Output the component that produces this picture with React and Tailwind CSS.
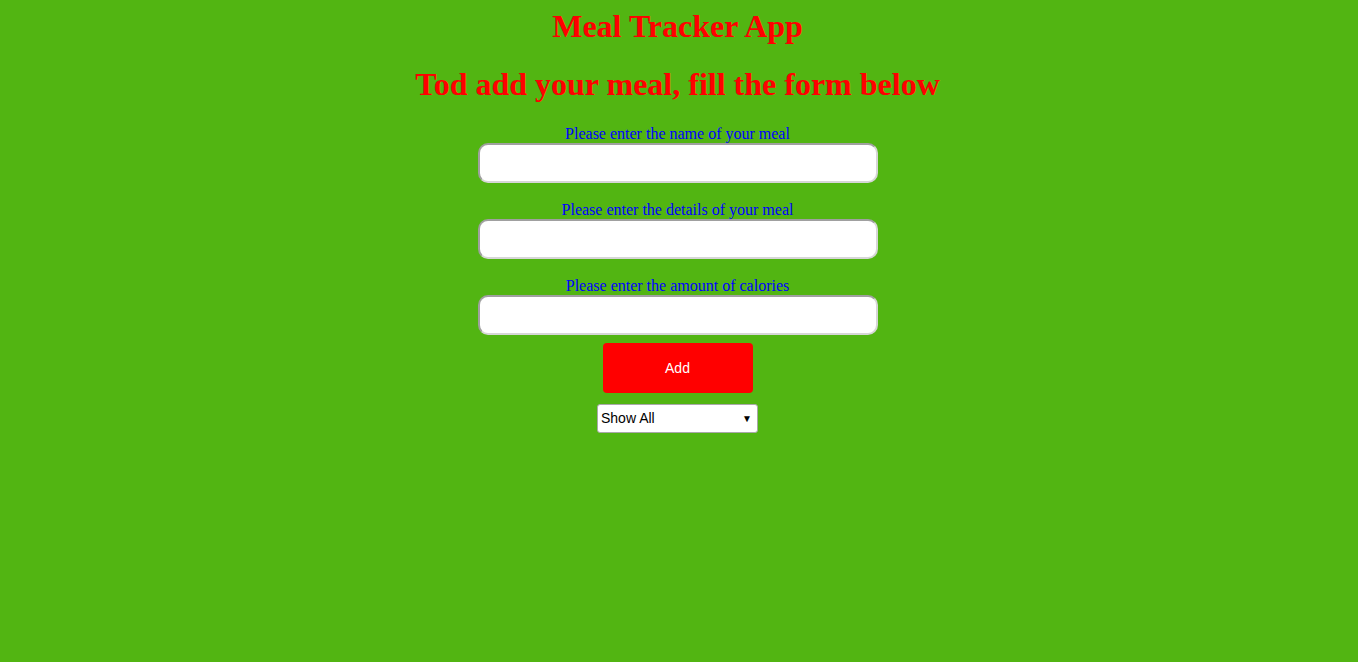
import { useState } from 'react';

const serif = { fontFamily: '"Liberation Serif", "Times New Roman", serif' };
const sans = { fontFamily: '"Liberation Sans", Arial, sans-serif' };

function Field({ label, value, onChange }) {
  return (
    <div className="flex flex-col items-center">
      <label className="text-[16px] leading-[18px] text-[#0000ff]" style={serif}>{label}</label>
      <input
        value={value}
        onChange={(e) => onChange(e.target.value)}
        className="w-[400px] h-[40px] bg-white rounded-[10px] border-2 border-t-[#a0a0a0] border-l-[#a0a0a0] border-r-[#d6d6d6] border-b-[#d6d6d6] px-2 outline-none"
      />
    </div>
  );
}

export default function App() {
  const [name, setName] = useState('');
  const [details, setDetails] = useState('');
  const [calories, setCalories] = useState('');
  const [filter, setFilter] = useState('all');

  return (
    <div className="min-h-[662px] bg-[#52b512] flex flex-col items-center pt-[9px] pr-[3px]">
      <h1 className="text-[32px] leading-[35px] font-bold text-[#ff0000]" style={serif}>Meal Tracker App</h1>
      <h1 className="mt-[23px] text-[32px] leading-[35px] font-bold text-[#ff0000]" style={serif}>Tod add your meal, fill the form below</h1>

      <div className="mt-[23px] flex flex-col items-center gap-[18px]">
        <Field label="Please enter the name of your meal" value={name} onChange={setName} />
        <Field label="Please enter the details of your meal" value={details} onChange={setDetails} />
        <Field label="Please enter the amount of calories" value={calories} onChange={setCalories} />
      </div>

      <button
        type="button"
        className="mt-[8px] w-[150px] h-[50px] bg-[#ff0000] rounded-[4px] text-white text-[14px]"
        style={sans}
      >
        Add
      </button>

      <div className="relative mt-[11px] w-[161px] h-[29px]" style={sans}>
        <select
          value={filter}
          onChange={(e) => setFilter(e.target.value)}
          className="appearance-none w-full h-full bg-white border border-[#a9a9a9] rounded-[3px] pl-[3px] text-[14px] text-black outline-none"
        >
          <option value="all">Show All</option>
          <option value="high">High Calorie</option>
          <option value="low">Low Calorie</option>
        </select>
        <span className="absolute right-[6px] top-[10px] text-[10px] leading-none text-black pointer-events-none">▼</span>
      </div>
    </div>
  );
}
